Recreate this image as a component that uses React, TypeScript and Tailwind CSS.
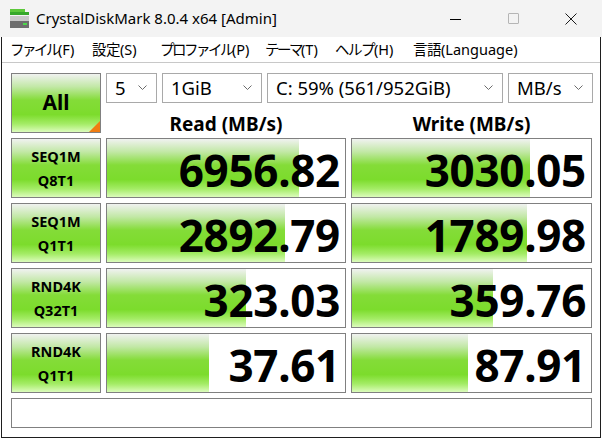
import React from 'react';

type Row = { l1: string; l2: string; read: string; readPct: number; write: string; writePct: number };

const rows: Row[] = [
  { l1: 'SEQ1M', l2: 'Q8T1', read: '6956.82', readPct: 192, write: '3030.05', writePct: 178 },
  { l1: 'SEQ1M', l2: 'Q1T1', read: '2892.79', readPct: 178, write: '1789.98', writePct: 175 },
  { l1: 'RND4K', l2: 'Q32T1', read: '323.03', readPct: 139, write: '359.76', writePct: 141 },
  { l1: 'RND4K', l2: 'Q1T1', read: '37.61', readPct: 102, write: '87.91', writePct: 116 },
];

const greenBar =
  'bg-[linear-gradient(to_bottom,#f0f2f0_0%,#c2e8a6_22%,#84dc38_45%,#7cdc2c_70%,#a4ec66_86%,#dcfcbc_100%)]';

// jp part gets squeezed so it reads like Yu Gothic UI's narrow kana
const menus = [
  { jp: 'ファイル', en: '(F)', w: 'w-[82px]', t: 'tracking-[-2.5px]' },
  { jp: '設定', en: '(S)', w: 'w-[68px]', t: 'tracking-[-0.5px]' },
  { jp: 'プロファイル', en: '(P)', w: 'w-[105px]', t: 'tracking-[-2.5px]' },
  { jp: 'テーマ', en: '(T)', w: 'w-[70px]', t: 'tracking-[-2.5px]' },
  { jp: 'ヘルプ', en: '(H)', w: 'w-[78px]', t: 'tracking-[-1.5px]' },
  { jp: '言語', en: '(Language)', w: 'w-[120px]', t: 'tracking-[-0.5px]' },
];

const Chevron = () => (
  <svg width="9" height="6" viewBox="0 0 9 6" className="shrink-0">
    <polyline points="0.5,0.5 4.5,4.5 8.5,0.5" fill="none" stroke="#6b6b6b" strokeWidth="1" />
  </svg>
);

const Select: React.FC<{ value: string; w: string }> = ({ value, w }) => (
  <div className={`${w} h-[30px] border border-[#a9a9a9] bg-white flex items-center justify-between pl-[8px] pr-[9px] text-[18.5px] text-black`}>
    <span className="leading-none">{value}</span>
    <Chevron />
  </div>
);

const Label: React.FC<{ l1: string; l2: string }> = ({ l1, l2 }) => (
  <div className={`w-[90px] h-[60px] border border-[#808080] ${greenBar} flex flex-col items-center justify-center font-bold text-[14.5px] leading-[24px] text-black`}>
    <span>{l1}</span>
    <span>{l2}</span>
  </div>
);

const Value: React.FC<{ text: string; fill: number; w: string }> = ({ text, fill, w }) => (
  <div className={`${w} h-[60px] border border-[#808080] bg-white relative`}>
    <div className={`absolute left-0 top-0 bottom-0 ${greenBar}`} style={{ width: fill }} />
    <div className="relative h-full flex items-center justify-end pr-[5px] pt-[3px] font-bold text-[44px] leading-[50px] text-black tracking-[-0.3px]">
      {text}
    </div>
  </div>
);

export default function App() {
  return (
    <div className="w-[602px] h-[439px] bg-white overflow-hidden font-['Noto_Sans','Noto_Sans_CJK_JP',sans-serif]">
      {/* title bar */}
      <div className="h-[37px] bg-[#f3f3f3] flex items-center">
        <svg width="20" height="20" viewBox="0 0 20 20" className="ml-[10px] mt-[1px]">
          <rect x="0" y="0" width="15" height="3" fill="#5cc83a" />
          <rect x="0" y="3" width="19" height="3" fill="#36a82a" />
          <rect x="0" y="7" width="19" height="5" fill="#c8c8c8" />
          <rect x="0" y="12" width="19" height="7" fill="#6e6e6e" />
          <rect x="13" y="14" width="4" height="2" fill="#4cd84a" />
        </svg>
        <span className="ml-[6px] text-[15px] text-black">CrystalDiskMark 8.0.4 x64 [Admin]</span>
        <div className="ml-auto flex items-center h-full">
          <div className="w-[58px] flex justify-center">
            <div className="w-[11px] h-px bg-black mt-[1px]" />
          </div>
          <div className="w-[58px] flex justify-center">
            <div className="w-[11px] h-[11px] border border-[#b5b5b5] rounded-[1px]" />
          </div>
          <div className="w-[60px] flex justify-center pr-[2px]">
            <svg width="12" height="12" viewBox="0 0 12 12">
              <path d="M0.5 0.5 L11.5 11.5 M11.5 0.5 L0.5 11.5" stroke="#1a1a1a" strokeWidth="1" />
            </svg>
          </div>
        </div>
      </div>

      {/* client frame */}
      <div className="ml-[1px] w-[600px] h-[401px] border-x border-b border-[#1e1e1e]">
        {/* menu */}
        <div className="h-[26px] flex items-center pl-[8px] border-b border-[#c8c8c8] text-[14.5px] text-black">
          {menus.map((m) => (
            <span key={m.jp} className={`${m.w} whitespace-nowrap`}>
              <span className={`${m.t} font-['Noto_Sans_CJK_JP',sans-serif]`}>{m.jp}</span>
              <span>{m.en}</span>
            </span>
          ))}
        </div>

        <div className="pl-[9px] pt-[10px] flex flex-col gap-[5px]">
          {/* top row */}
          <div className="flex gap-[5px]">
            <div className={`relative w-[90px] h-[60px] border border-[#808080] ${greenBar} flex items-center justify-center font-bold text-[21px] text-black`}>
              All
              <div className="absolute right-0 bottom-0 w-0 h-0 border-l-[11px] border-l-transparent border-b-[11px] border-b-[#f07c12]" />
            </div>
            <div className="flex flex-col">
              <div className="flex gap-[5px]">
                <Select value="5" w="w-[51px]" />
                <Select value="1GiB" w="w-[100px]" />
                <Select value="C: 59% (561/952GiB)" w="w-[236px]" />
                <Select value="MB/s" w="w-[85px]" />
              </div>
              <div className="flex gap-[5px] font-bold text-[19px] text-black h-[30px] items-center pt-[13px]">
                <div className="w-[240px] text-center">Read (MB/s)</div>
                <div className="w-[241px] text-center">Write (MB/s)</div>
              </div>
            </div>
          </div>

          {rows.map((r, i) => (
            <div key={i} className="flex gap-[5px]">
              <Label l1={r.l1} l2={r.l2} />
              <Value text={r.read} fill={r.readPct} w="w-[240px]" />
              <Value text={r.write} fill={r.writePct} w="w-[241px]" />
            </div>
          ))}

          <div className="w-[581px] h-[30px] border border-[#808080] bg-white" />
        </div>
      </div>
    </div>
  );
}
